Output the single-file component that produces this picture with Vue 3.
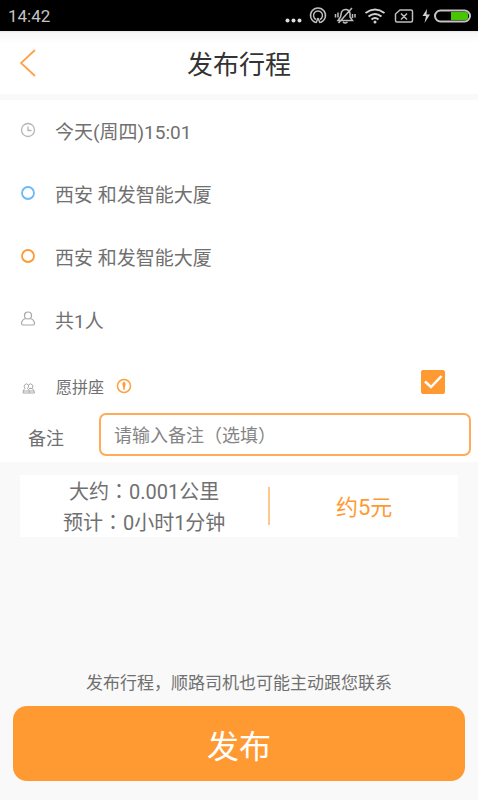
<script setup>
import { ref } from 'vue'

const rows = [
  { icon: 'clock', text: '今天(周四)15:01' },
  { icon: 'from', text: '西安 和发智能大厦' },
  { icon: 'to', text: '西安 和发智能大厦' },
  { icon: 'person', text: '共1人' }
]
const share = ref(true)
const remark = ref('')
</script>

<template>
  <div class="page">
    <div class="status">
      <span class="time">14:42</span>
      <svg class="status-icons" width="187" height="20" viewBox="0 0 187 20" fill="none" stroke="#bdbdbd" stroke-width="1.5" aria-hidden="true">
        <g fill="#dedede" stroke="none">
          <circle cx="2.5" cy="14.5" r="2" />
          <circle cx="8.5" cy="14.5" r="2" />
          <circle cx="14.5" cy="14.5" r="2" />
        </g>
        <path d="M30.500 16.500A7.500 7.500 0 1 1 35.500 16.500M31 13.500A4.500 4.500 0 1 1 35 13.500M33 12l-2 5M33 12l2 5" />
        <path d="M53 14.500h14.500l-2.500-3.500v-3.500a4.500 4.500 0 0 0-8.500-1.500l-1 5zM58 16q2 2 4.500 0M67 2L53.500 17M50.500 8v3.500M53 6.500v5M67.500 8v4M70 8v3.500" />
        <g stroke-width="2" stroke="#d0d0d0">
          <path d="M80.500 7q9.500-7 19 0M83.500 10.500q6.500-5 13 0M86.500 13.500q3.500-3 7 0" />
          <circle cx="90" cy="16" r="1.500" fill="#d0d0d0" stroke="none" />
        </g>
        <path d="M115 4h11q1.500 0 1.500 1.500v9q0 1.500-1.500 1.500h-14q-1.500 0-1.500-1.500v-6.500zM116 7.500l6 6M122 7.500l-6 6" />
        <path d="M142 3l-4.500 7h3.500l-1.500 7 5.500-8.500h-3.500z" fill="#d0d0d0" stroke="none" />
        <rect x="150" y="4.500" width="35" height="11" rx="5.500" stroke="#c4c4c4" stroke-width="2" />
        <path d="M166 6h15q2 0 2 2v4q0 2-2 2h-15z" fill="#48c400" stroke="none" />
      </svg>
    </div>

    <header class="header">
      <button class="back" type="button" aria-label="返回">
        <svg width="16" height="28" viewBox="0 0 16 28" fill="none" stroke="#ffa246" stroke-width="1.800">
          <path d="M15 1L1 14l14 13" />
        </svg>
      </button>
      <h1>发布行程</h1>
    </header>

    <main>
      <ul class="rows">
        <li v-for="(row, i) in rows" :key="i" class="row">
          <svg class="icon" width="16" height="16" viewBox="0 0 16 16" fill="none" aria-hidden="true">
            <g v-if="row.icon === 'clock'" stroke="#b5b5b5" stroke-width="1.300">
              <circle cx="8" cy="8" r="6.500" />
              <path d="M8 4.500V8.500h3.500" />
            </g>
            <circle v-else-if="row.icon === 'from'" cx="8" cy="8" r="6" stroke="#6bb9f5" stroke-width="1.800" />
            <circle v-else-if="row.icon === 'to'" cx="8" cy="8" r="6" stroke="#ff9a33" stroke-width="1.800" />
            <g v-else stroke="#a8a8a8" stroke-width="1.200">
              <circle cx="8" cy="4.500" r="3.500" />
              <path d="M5.500 7.500Q1.500 9 1.500 12.500q0 1.500 1.500 1.500h10q1.500 0 1.500-1.500Q14.500 9 10.500 7.500" />
            </g>
          </svg>
          <span>{{ row.text }}</span>
        </li>
      </ul>

      <div class="share">
        <svg class="icon" width="16" height="16" viewBox="0 0 16 16" fill="none" stroke="#a8a8a8" aria-hidden="true">
          <path d="M5 8.500Q3.500 7 4.500 5q2-2.500 4 0 2-2.500 4 0 1 2-.5 3.500M5 8.500Q3 9.500 3 13h6.500q0-3.500-2-4.500Q9 7 8.500 5M9 8.500h3Q14.500 9.500 14.500 13h-5M3 11h11" />
        </svg>
        <label for="share">愿拼座</label>
        <svg class="info" width="16" height="16" viewBox="0 0 16 16" fill="none" aria-hidden="true">
          <circle cx="8" cy="8" r="6.500" stroke="#ffa040" stroke-width="1.500" />
          <path d="M8 3.500Q10.500 5 9 8.500L8.500 12h-1L7 8.500Q5.500 5 8 3.500z" fill="#ff9a33" />
        </svg>
        <span class="check">
          <input id="share" v-model="share" type="checkbox" />
          <svg v-if="share" width="24" height="24" viewBox="0 0 24 24" fill="none" stroke="#fff" stroke-width="2.500" aria-hidden="true">
            <path d="M4 11.500l6 5.500L20.500 6" />
          </svg>
        </span>
      </div>

      <div class="remark">
        <label for="remark">备注</label>
        <input id="remark" v-model="remark" type="text" placeholder="请输入备注（选填）" />
      </div>
    </main>

    <section class="bottom">
      <div class="card">
        <div class="estimate">
          <p>大约<span class="colon">：</span>0.001公里</p>
          <p>预计<span class="colon">：</span>0小时1分钟</p>
        </div>
        <div class="price">约5元</div>
      </div>
      <p class="hint">发布行程，顺路司机也可能主动跟您联系</p>
      <button class="submit" type="button">发布</button>
    </section>
  </div>
</template>

<style>
body {
  margin: 0;
  background: #fff;
}
</style>

<style scoped>
.page {
  box-sizing: border-box;
  min-height: 100vh;
  padding-right: 2px;
  display: flex;
  flex-direction: column;
  background: #fff;
  color: #707070;
  font-family: Roboto, "Noto Sans CJK SC", sans-serif;
  font-size: 19px;
}

h1,
p,
ul {
  margin: 0;
  padding: 0;
}

button,
input {
  font-family: inherit;
}

.status {
  height: 31px;
  padding: 0 6px 0 8px;
  display: flex;
  align-items: center;
  justify-content: space-between;
  background: #000;
}

.time {
  color: #c4c4c4;
  font-size: 17px;
}

.header {
  height: 63px;
  padding: 0 20px;
  display: grid;
  grid-template-columns: 1fr auto 1fr;
  align-items: center;
  border-bottom: 6px solid #f9f9f9;
  background: linear-gradient(#e4e4e4, #f8f8f8 2px, #fbfbfb 8px, #fff 12px);
}

.back {
  justify-self: start;
  padding: 0;
  border: 0;
  background: none;
  display: flex;
}

h1 {
  padding-top: 4px;
  color: #333;
  font-size: 26px;
  line-height: 36px;
  font-weight: 400;
}

.rows {
  list-style: none;
}

.row {
  box-sizing: border-box;
  height: 63px;
  padding: 0 20px 3px;
  display: flex;
  align-items: center;
  gap: 19px;
}

.icon {
  flex: none;
}

.share {
  box-sizing: border-box;
  height: 60px;
  padding: 0 33px 12px 20px;
  display: flex;
  align-items: flex-end;
  font-size: 16px;
  line-height: 24px;
}

.share label {
  margin: 0 12px 0 20px;
}

.share .icon {
  margin-bottom: 4px;
}

.share .info {
  margin-bottom: 6px;
}

.check {
  margin-left: auto;
  margin-bottom: 6px;
  display: grid;
}

.check input,
.check svg {
  grid-area: 1 / 1;
}

.check svg {
  pointer-events: none;
}

.check input {
  appearance: none;
  width: 24px;
  height: 24px;
  margin: 0;
  border: 1px solid #ff9a33;
  border-radius: 2px;
}

.check input:checked {
  background: #ff9a33;
}

.remark {
  padding: 1px 7px 6px 28px;
  display: flex;
  align-items: center;
  gap: 35px;
}

.remark label {
  flex: none;
  padding-top: 4px;
  font-size: 18px;
}

.remark input {
  flex: 1;
  min-width: 0;
  height: 43px;
  box-sizing: border-box;
  padding: 2px 13px 0;
  border: 2px solid #ffab57;
  border-radius: 7px;
  background: #fff;
  color: #707070;
  font-size: 18px;
  outline: 0;
}

.remark input::placeholder {
  color: #858585;
}

.bottom {
  flex: 1;
  display: flex;
  flex-direction: column;
  padding: 13px 13px 19px;
  background: #f9f9f9;
}

.card {
  margin: 0 7px;
  padding: 12px 0;
  display: grid;
  grid-template-columns: 4fr 3fr;
  background: #fff;
}

.estimate {
  box-sizing: border-box;
  height: 38px;
  padding-top: 3px;
  display: flex;
  flex-direction: column;
  justify-content: center;
  text-align: center;
  font-size: 20px;
  line-height: 31px;
  border-right: 2px solid #ffc78f;
}

.colon {
  font-family: "Noto Sans CJK TC", sans-serif;
  line-height: 1;
}

.price {
  align-self: center;
  padding-top: 4px;
  text-align: center;
  color: #ff9a33;
  font-size: 22px;
  line-height: 32px;
}

.hint {
  margin: auto 0 10px;
  text-align: center;
  font-size: 17px;
  line-height: 26px;
}

.submit {
  height: 75px;
  border: 0;
  border-radius: 14px;
  background: #ff9a33;
  color: #fff;
  font-size: 32px;
}
</style>
